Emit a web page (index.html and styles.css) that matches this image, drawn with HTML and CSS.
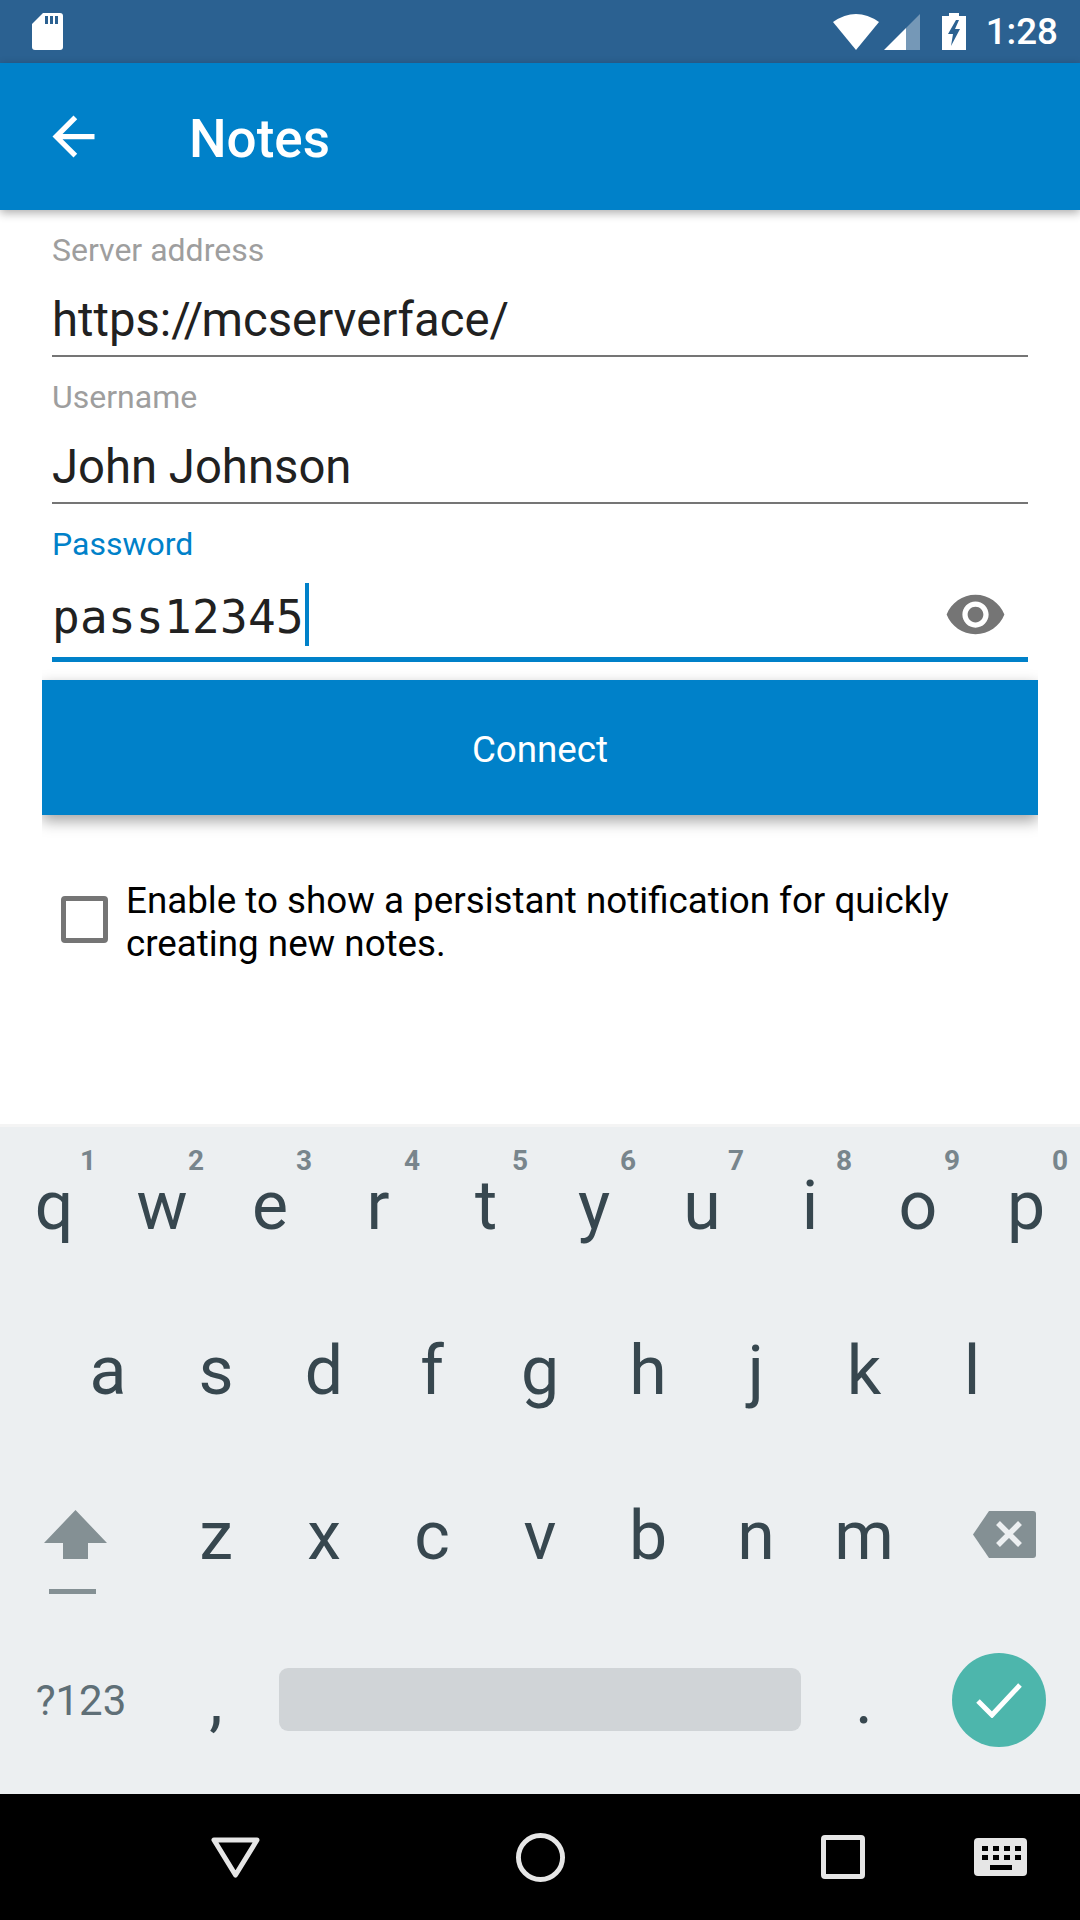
FILE: index.html
```html
<!DOCTYPE html>
<html lang="en">
<head>
<meta charset="utf-8">
<title>Notes</title>
<link rel="stylesheet" href="styles.css">
</head>
<body>
<div class="screen">
  <header class="status">
    <svg class="ic-sd" viewBox="0 0 31 37"><path d="M11 0H28a3 3 0 0 1 3 3V34a3 3 0 0 1-3 3H3a3 3 0 0 1-3-3V11Z" fill="#fff"/><path d="M13 3h3v8h-3zM18 3h3v8h-3zM23 3h3v8h-3z" fill="#2B6191"/></svg>
    <div class="status-right">
      <svg class="ic-wifi" viewBox="0 0 46 36"><path d="M0 8Q23-8 46 8L23 36Z" fill="#fff"/></svg>
      <svg class="ic-signal" viewBox="0 0 36 36"><path d="M0 36 22 14V36Z" fill="#fff"/><path d="M22 14 36 0V36H22Z" fill="#fff" fill-opacity=".35"/></svg>
      <svg class="ic-batt" viewBox="0 0 24 37"><path d="M7 0H17V3H24V37H0V3H7Z" fill="#fff"/><path d="M14 7 6 21H11L9 33 18 16H13L17 7Z" fill="#2B6191"/></svg>
      <span class="clock">1:28</span>
    </div>
  </header>

  <div class="appbar">
    <svg class="ic-back" viewBox="0 0 24 24"><path d="M20 11H7.83l5.59-5.59L12 4l-8 8 8 8 1.41-1.41L7.83 13H20v-2z" fill="#fff"/></svg>
    <h1 class="title">Notes</h1>
  </div>

  <main class="content">
    <div class="field">
      <div class="label">Server address</div>
      <div class="value">https:<span class="slashes">//</span>mcserverface/</div>
    </div>
    <div class="field">
      <div class="label">Username</div>
      <div class="value">John Johnson</div>
    </div>
    <div class="field field-focus">
      <div class="label">Password</div>
      <div class="value value-pass">
        <span class="mono">pass12345</span><span class="caret"></span>
        <svg class="ic-eye" viewBox="0 0 24 24"><path d="M12 4.5C7 4.5 2.73 7.61 1 12c1.73 4.39 6 7.5 11 7.5s9.27-3.11 11-7.5c-1.73-4.39-6-7.5-11-7.5zM12 17c-2.76 0-5-2.24-5-5s2.24-5 5-5 5 2.24 5 5-2.24 5-5 5zm0-8c-1.66 0-3 1.34-3 3s1.34 3 3 3 3-1.34 3-3-1.34-3-3-3z" fill="#757575"/></svg>
      </div>
    </div>
    <button class="connect">Connect</button>
    <label class="check-row">
      <span class="checkbox"></span>
      <span class="check-text">Enable to show a persistant notification for quickly creating new notes.</span>
    </label>
  </main>

  <section class="keyboard">
    <div class="row row-top">
      <div class="key">q<span class="hint">1</span></div>
      <div class="key">w<span class="hint">2</span></div>
      <div class="key">e<span class="hint">3</span></div>
      <div class="key">r<span class="hint">4</span></div>
      <div class="key">t<span class="hint">5</span></div>
      <div class="key">y<span class="hint">6</span></div>
      <div class="key">u<span class="hint">7</span></div>
      <div class="key">i<span class="hint">8</span></div>
      <div class="key">o<span class="hint">9</span></div>
      <div class="key">p<span class="hint">0</span></div>
    </div>
    <div class="row row-home">
      <div class="key">a</div><div class="key">s</div><div class="key">d</div><div class="key">f</div><div class="key">g</div><div class="key">h</div><div class="key">j</div><div class="key">k</div><div class="key">l</div>
    </div>
    <div class="row">
      <div class="wide wide-shift">
        <svg class="ic-shift" viewBox="0 0 63 84"><path d="M31.500 0 63 33H44V49H19V33H0Z" fill="#849094"/><path d="M5 79H52V84H5Z" fill="#849094"/></svg>
      </div>
      <div class="key">z</div><div class="key">x</div><div class="key">c</div><div class="key">v</div><div class="key">b</div><div class="key">n</div><div class="key">m</div>
      <div class="wide wide-back">
        <svg class="ic-del" viewBox="0 0 63 47"><path d="M16 0H60a3 3 0 0 1 3 3V44a3 3 0 0 1-3 3H16L0 23.500Z" fill="#849094"/><path d="M25 12 47 34M47 12 25 34" stroke="#ECEFF1" stroke-width="5.500" fill="none"/></svg>
      </div>
    </div>
    <div class="row row-bottom">
      <div class="wide sym">?123</div>
      <div class="key">,</div>
      <div class="space"></div>
      <div class="key">.</div>
      <div class="wide">
        <div class="enter"><svg class="ic-check" viewBox="0 0 46 36"><path d="M2 19 16 33 44 3" stroke="#fff" stroke-width="5" fill="none"/></svg></div>
      </div>
    </div>
  </section>

  <nav class="navbar">
    <svg class="ic-nav-back" viewBox="0 0 49 41"><path d="M3 3H46L24.500 38Z" stroke="#E6E6E6" stroke-width="5" stroke-linejoin="round" fill="none"/></svg>
    <svg class="ic-nav-home" viewBox="0 0 50 50"><circle cx="25" cy="25" r="22.500" stroke="#E6E6E6" stroke-width="5" fill="none"/></svg>
    <svg class="ic-nav-recent" viewBox="0 0 44 44"><rect x="2.500" y="2.500" width="39" height="39" rx="1.500" stroke="#E6E6E6" stroke-width="5" fill="none"/></svg>
    <svg class="ic-nav-kb" viewBox="0 0 53 38"><rect width="53" height="38" rx="4" fill="#E6E6E6"/><path d="M8 8h6v5H8zM19 8h6v5h-6zM30 8h6v5h-6zM41 8h6v5h-6zM8 17h6v5H8zM19 17h6v5h-6zM30 17h6v5h-6zM41 17h6v5h-6zM16 27h22v5H16z" fill="#000"/></svg>
  </nav>
</div>
</body>
</html>
```

FILE: styles.css
```css
* { box-sizing: border-box; }
html, body { margin: 0; padding: 0; }
body { font-family: Roboto, "Liberation Sans", sans-serif; background: #fff; }

.screen { width: 1080px; height: 1920px; display: flex; flex-direction: column; overflow: hidden; }

/* status bar */
.status { height: 63px; flex: none; background: #2B6191; display: flex; align-items: center; justify-content: space-between; padding: 0 22px 0 32px; }
.status-right { display: flex; align-items: center; }
.ic-sd { width: 31px; height: 37px; }
.ic-wifi { width: 46px; height: 36px; }
.ic-signal { width: 36px; height: 36px; margin-left: 5px; }
.ic-batt { width: 24px; height: 37px; margin-left: 22px; }
.clock { color: #fff; font-size: 36.750px; font-weight: 500; margin-left: 20px; line-height: 63px; }

/* app bar */
.appbar { height: 147px; flex: none; background: #0081C9; display: flex; align-items: center; padding-left: 42px; position: relative; z-index: 2; box-shadow: 0 3px 9px rgba(0,0,0,.32); }
.ic-back { width: 63px; height: 63px; }
.title { margin: 4px 0 0 84px; color: #fff; font-size: 53px; font-weight: 500; }

/* form */
.content { flex: 1; display: flex; flex-direction: column; padding: 0 42px; background: #fff; }
.field { margin: 0 10px; padding-top: 20px; border-bottom: 2px solid #757575; height: 147px; display: flex; flex-direction: column; }
.label { font-size: 32px; line-height: 41px; color: #9E9E9E; }
.value { font-size: 47.250px; line-height: 72px; padding-top: 13px; color: #212121; }
.slashes { letter-spacing: -1.800px; }
.field-focus { height: 158px; border-bottom: 5px solid #0081C9; }
.field-focus .label { color: #0081C9; }
.value-pass { display: flex; align-items: center; padding-right: 21px; line-height: 80px; }
.mono { font-family: "DejaVu Sans Mono", "Liberation Mono", monospace; font-size: 46px; letter-spacing: .3px; margin-top: -1px; }
.caret { width: 4px; height: 63px; background: #0081C9; margin: -6px 0 0 1px; }
.ic-eye { width: 63px; height: 63px; margin: -6px 0 0 auto; }

.connect { margin-top: 18px; height: 135px; flex: none; border: 0; padding: 4px 0 0; background: #0081C9; color: #fff; font-family: inherit; font-size: 36.750px; box-shadow: 0 6px 14px rgba(0,0,0,.36); clip-path: inset(-18px 0 -24px 0); }

.check-row { margin-top: 61px; padding-left: 19px; display: flex; align-items: center; gap: 18px; }
.checkbox { width: 47px; height: 47px; flex: none; margin-top: -2px; border: 5px solid #757575; border-radius: 4px; }
.check-text { font-size: 36.750px; line-height: 43px; color: #000; max-width: 860px; padding-top: 3px; }

/* keyboard */
.keyboard { height: 670px; flex: none; background: #ECEFF1; border-top: 3px solid #F4F4F4; padding-bottom: 14px; position: relative; }
.row { display: flex; height: 165px; }
.row-top { height: 163px; }
.row-home { padding-left: 54px; }
.row-bottom { height: 160px; }
.key { width: 108px; flex: none; text-align: center; font-size: 68px; line-height: 162px; color: #37474F; position: relative; }
.row-top .key { line-height: 158px; }
.row-bottom .key { line-height: 160px; }
.hint { position: absolute; top: 13px; left: 0; width: 176px; text-align: center; font-size: 28px; line-height: 42px; font-weight: 700; color: #78858C; }
.wide { width: 162px; flex: none; display: flex; align-items: center; justify-content: center; }
.wide-shift { justify-content: flex-start; align-items: flex-start; padding: 55px 0 0 44px; }
.wide-back { justify-content: flex-start; align-items: flex-start; padding: 56px 0 0 55px; }
.ic-shift { width: 63px; height: 84px; }
.ic-del { width: 63px; height: 47px; }
.sym { font-size: 42px; color: #5F6F77; }
.space { width: 522px; height: 63px; flex: none; margin: 48px 9px 0; background: #D0D4D7; border-radius: 9px; }
.enter { width: 94px; height: 94px; border-radius: 50%; background: #4DB6AC; display: flex; align-items: center; justify-content: center; }
.ic-check { width: 46px; height: 36px; }

/* nav bar */
.navbar { height: 126px; flex: none; background: #000; display: flex; align-items: center; padding-left: 211px; }
.ic-nav-back { width: 49px; height: 41px; }
.ic-nav-home { width: 49px; height: 49px; margin-left: 256px; }
.ic-nav-recent { width: 44px; height: 44px; margin-left: 256px; }
.ic-nav-kb { width: 53px; height: 38px; margin-left: 109px; }
```
